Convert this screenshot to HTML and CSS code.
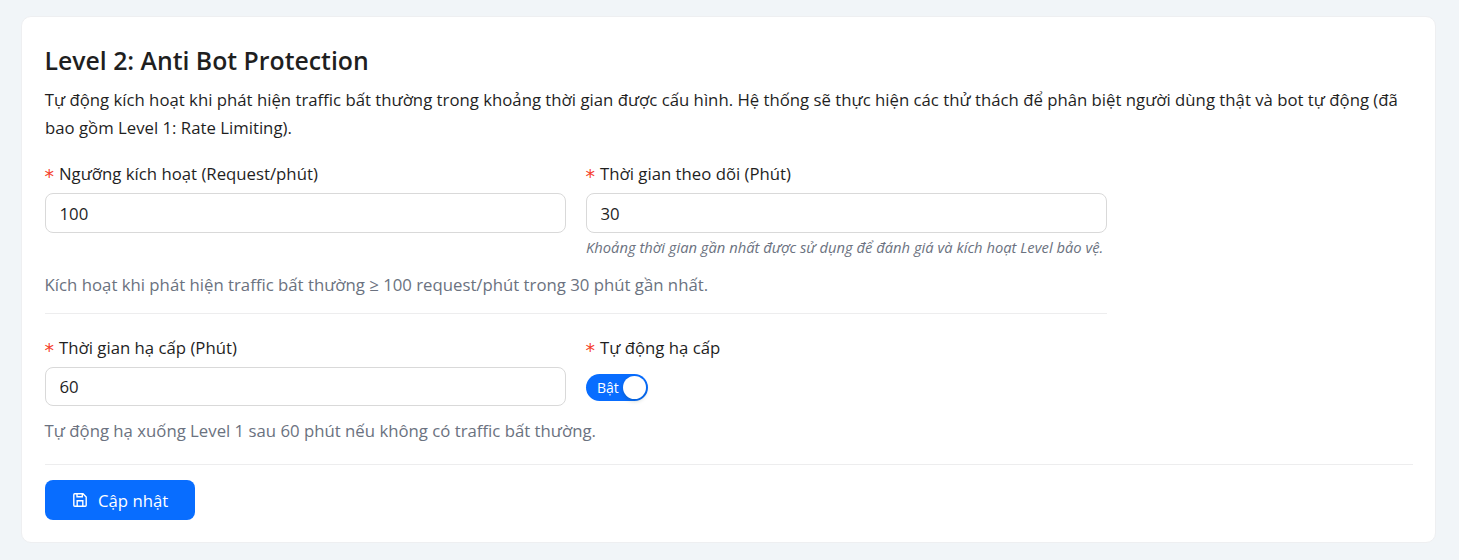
FILE: index.html
```html
<!DOCTYPE html>
<html lang="vi">
<head>
<meta charset="utf-8">
<title>Level 2: Anti Bot Protection</title>
<link rel="stylesheet" href="styles.css">
</head>
<body>
<main class="card">
  <h1 class="title">Level 2: Anti Bot Protection</h1>
  <p class="intro">Tự động kích hoạt khi phát hiện traffic bất thường trong khoảng thời gian được cấu hình. Hệ thống sẽ thực hiện các thử thách để phân biệt người dùng thật và bot tự động (đã<br>bao gồm Level 1: Rate Limiting).</p>
  <form class="form">
    <section class="row row-trigger">
      <div class="field">
        <label class="label" for="threshold"><span class="star">*</span><span>Ngưỡng kích hoạt (Request/phút)</span></label>
        <input class="input" id="threshold" type="text" value="100">
      </div>
      <div class="field">
        <label class="label" for="window"><span class="star">*</span><span>Thời gian theo dõi (Phút)</span></label>
        <input class="input" id="window" type="text" value="30">
        <p class="hint">Khoảng thời gian gần nhất được sử dụng để đánh giá và kích hoạt Level bảo vệ.</p>
      </div>
    </section>
    <p class="summary summary-trigger">Kích hoạt khi phát hiện traffic bất thường ≥ 100 request/phút trong 30 phút gần nhất.</p>
    <section class="row row-downgrade">
      <div class="field">
        <label class="label" for="cooldown"><span class="star">*</span><span>Thời gian hạ cấp (Phút)</span></label>
        <input class="input input-short" id="cooldown" type="text" value="60">
      </div>
      <div class="field">
        <span class="label"><span class="star">*</span><span>Tự động hạ cấp</span></span>
        <button class="switch" type="button" role="switch" aria-checked="true"><span>Bật</span><span class="knob"></span></button>
      </div>
    </section>
    <p class="summary summary-downgrade">Tự động hạ xuống Level 1 sau 60 phút nếu không có traffic bất thường.</p>
    <footer class="footer">
      <button class="save" type="button">
        <svg class="save-icon" viewBox="0 0 14 14" fill="none" stroke="currentColor" stroke-width="1.4"><path d="M1.700 .8H10L13.200 4V12.300Q13.200 13.200 12.300 13.200H1.700Q.8 13.200 .8 12.300V1.700Q.8 .8 1.700 .8Z"/><path d="M4 1V3.700H9.300V1M4.200 13V7.700H9.800V13"/></svg>
        <span>Cập nhật</span>
      </button>
    </footer>
  </form>
</main>
</body>
</html>
```
FILE: styles.css
```css
* { box-sizing: border-box; }
body {
  margin: 0;
  padding: 16px 23px 17px 21px;
  height: 560px;
  background: #f1f5f8;
  color: #1f1f1f;
  font-family: "Open Sans", "Noto Sans", sans-serif;
  font-size: 16.75px;
  overflow: hidden;
}
.card {
  height: 527px;
  padding: 28px 22px 0 23px;
  background: #fff;
  border: 1px solid #eeeff1;
  border-radius: 10px;
}
.title { margin: 0; font-size: 24.8px; line-height: 30px; font-weight: 600; white-space: nowrap; text-indent: -.5px; }
.intro { margin: 11px 0 0; line-height: 28px; white-space: nowrap; text-indent: -.3px; }
.form { margin-top: 18px; }
.row { display: grid; grid-template-columns: 521px 521px; column-gap: 20px; width: 1062px; }
.field { display: flex; flex-direction: column; align-items: flex-start; white-space: nowrap; }
.label { display: flex; line-height: 28px; height: 33px; }
.star { width: 14px; padding-top: 2px; color: #f5402c; font-family: "DejaVu Sans", sans-serif; font-size: 19px; text-indent: -.4px; }
.input {
  width: 521px;
  height: 40px;
  padding: 0 13.5px;
  border: 1px solid #d9d9d9;
  border-radius: 8px;
  background: #fff;
  color: #1f1f1f;
  font: inherit;
  outline: 0;
}
.input-short { height: 39px; }
.hint { margin: 3px 0 1px; font-size: 14.77px; line-height: 22px; font-style: italic; color: #6b7280; }
.summary { margin: 0; line-height: 28px; color: #6b7280; white-space: nowrap; text-indent: -.4px; }
.summary-trigger { margin-top: 12px; width: 1062px; height: 43px; border-bottom: 1px solid #ededee; }
.row-downgrade { margin-top: 20px; }
.summary-downgrade { margin-top: 11px; }
.switch {
  display: flex;
  align-items: center;
  justify-content: space-between;
  width: 62px;
  height: 27px;
  margin-top: 7px;
  padding: 0 2px 0 11px;
  border: 0;
  border-radius: 14px;
  background: #086dff;
  color: #fff;
  font: 14px "Open Sans", sans-serif;
}
.knob { width: 23px; height: 23px; border-radius: 50%; background: #fff; box-shadow: 0 2px 4px rgba(0, 35, 11, .2); }
.footer { margin-top: 19px; padding-top: 15px; border-top: 1px solid #ededee; }
.save {
  display: flex;
  align-items: center;
  width: 150px;
  height: 40px;
  padding: 0 0 0 28px;
  gap: 11px;
  border: 0;
  border-radius: 8px;
  background: #086dff;
  color: #fff;
  font: inherit;
  white-space: nowrap;
}
.save-icon { width: 14px; height: 14px; flex: none; }
```
